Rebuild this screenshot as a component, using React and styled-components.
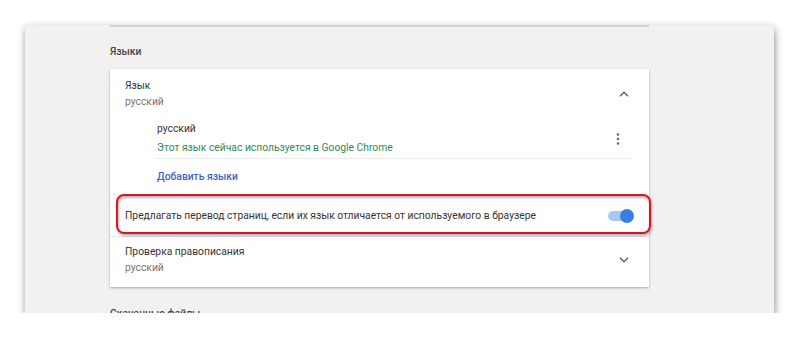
import styled, { createGlobalStyle } from "styled-components";

const GlobalStyle = createGlobalStyle`
  body {
    margin: 0;
    background: #fff;
    font-family: Roboto, "Liberation Sans", sans-serif;
    font-size: 10.3px;
    color: #333;
  }
`;

function ChevronIcon({ up }) {
  return (
    <svg width="10" height="6" viewBox="0 0 10 6">
      <path
        d={up ? "M1 5.2 L5 1.2 L9 5.2" : "M1 0.8 L5 4.8 L9 0.8"}
        fill="none"
        stroke="#5f5f5f"
        strokeWidth="1.4"
      />
    </svg>
  );
}

function KebabIcon() {
  return (
    <svg width="4" height="12" viewBox="0 0 4 12">
      <circle cx="2" cy="1.5" r="1.3" fill="#6b6b6b" />
      <circle cx="2" cy="6" r="1.3" fill="#6b6b6b" />
      <circle cx="2" cy="10.5" r="1.3" fill="#6b6b6b" />
    </svg>
  );
}

function App() {
  return (
    <>
      <GlobalStyle />
      <Page>
        <Panel>
          <Column>
            <Heading>Языки</Heading>
            <Card>
              <ExpandRow>
                <div>
                  <Primary>Язык</Primary>
                  <Secondary>русский</Secondary>
                </div>
                <ChevronIcon up />
              </ExpandRow>
              <SubList>
                <LangItem>
                  <div>
                    <Primary>русский</Primary>
                    <InUse>Этот язык сейчас используется в Google Chrome</InUse>
                  </div>
                  <KebabIcon />
                </LangItem>
              </SubList>
              <AddLink>Добавить языки</AddLink>
              <ToggleRow>
                <Primary>Предлагать перевод страниц, если их язык отличается от используемого в браузере</Primary>
                <Toggle>
                  <Knob />
                </Toggle>
                <Highlight />
              </ToggleRow>
              <ExpandRow last>
                <div>
                  <Primary>Проверка правописания</Primary>
                  <Secondary>русский</Secondary>
                </div>
                <ChevronIcon />
              </ExpandRow>
            </Card>
            <NextHeading>Скачанные файлы</NextHeading>
          </Column>
        </Panel>
      </Page>
    </>
  );
}

export default App;

const Page = styled.div`
  padding: 25px 26px 0 25px;
`;

const Panel = styled.div`
  height: 288px;
  background: #f1f1f1;
  overflow: hidden;
  box-shadow: 1px 5px 8px rgba(0, 0, 0, 0.35), 0 0 6px rgba(0, 0, 0, 0.12);
`;

const Column = styled.div`
  margin-left: 85px;
  width: 539px;
  border-top: 2px solid #d2d2d2;
`;

const Heading = styled.div`
  padding: 17px 0 0;
  margin-bottom: 9px;
  line-height: 16px;
  font-weight: 500;
  color: #444;
`;

const NextHeading = styled(Heading)`
  padding-top: 19px;
`;

const Card = styled.div`
  background: #fff;
  box-shadow: 0 1px 2px rgba(0, 0, 0, 0.25), 0 1px 4px rgba(0, 0, 0, 0.08);
`;

const Primary = styled.div`
  line-height: 16px;
  color: #333;
`;

const Secondary = styled.div`
  line-height: 16px;
  color: #757575;
`;

const ExpandRow = styled.div`
  display: flex;
  align-items: center;
  justify-content: space-between;
  padding: ${(p) => (p.last ? "7px 20px 11px 15px" : "9px 20px 0 15px")};
  border-top: ${(p) => (p.last ? "1px solid #ececec" : "none")};
`;

const SubList = styled.div`
  margin: 11px 16px 0 45px;
`;

const LangItem = styled.div`
  display: flex;
  align-items: center;
  justify-content: space-between;
  padding: 0 13px 2px 2px;
  border-bottom: 1px solid #ececec;

  & > div {
    display: flex;
    flex-direction: column;
    gap: 3px;
  }
`;

const InUse = styled.div`
  line-height: 16px;
  color: #2f8a55;
`;

const AddLink = styled.div`
  padding: 10px 0 9px 47px;
  line-height: 16px;
  font-weight: 500;
  color: #3c62c8;
`;

const ToggleRow = styled.div`
  position: relative;
  display: flex;
  align-items: center;
  justify-content: space-between;
  height: 42px;
  padding: 0 15px;
  border-top: 1px solid #ececec;
  box-sizing: border-box;
`;

const Toggle = styled.div`
  position: relative;
  width: 24px;
  height: 10px;
  margin-right: 2px;
  border-radius: 5px;
  background: #a9c5f5;
`;

const Knob = styled.div`
  position: absolute;
  right: -2px;
  top: -2px;
  width: 14px;
  height: 14px;
  border-radius: 50%;
  background: #3b7ee8;
`;

const Highlight = styled.div`
  position: absolute;
  left: 6px;
  right: -2px;
  top: -1px;
  bottom: 2px;
  border: 2.5px solid #dc1420;
  border-radius: 8px;
  box-shadow: inset 1px 2px 3px rgba(0, 0, 0, 0.3), 1px 2px 3px rgba(0, 0, 0, 0.3);
  pointer-events: none;
`;
